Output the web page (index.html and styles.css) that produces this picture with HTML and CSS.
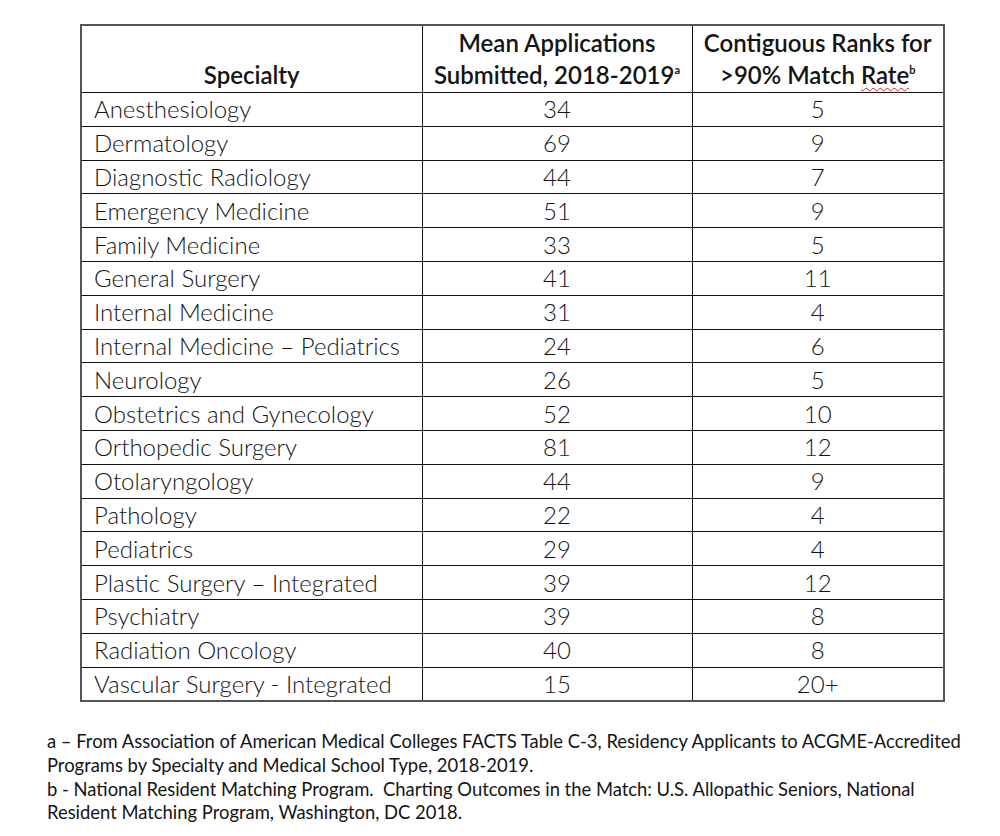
FILE: index.html
```html
<!DOCTYPE html>
<html>
<head>
<meta charset="utf-8">
<link rel="stylesheet" href="styles.css">
</head>
<body>
<div class="page">
  <table class="data">
    <colgroup>
      <col class="c1"><col class="c2"><col class="c3">
    </colgroup>
    <thead>
      <tr>
        <th class="spec">Specialty</th>
        <th>Mean Applications<br>Submitted, 2018-2019<sup>a</sup></th>
        <th>Contiguous Ranks for<br>&gt;90% Match <span class="spell">Rate</span><sup>b</sup></th>
      </tr>
    </thead>
    <tbody>
      <tr><td>Anesthesiology</td><td>34</td><td>5</td></tr>
      <tr><td>Dermatology</td><td>69</td><td>9</td></tr>
      <tr><td>Diagnostic Radiology</td><td>44</td><td>7</td></tr>
      <tr><td>Emergency Medicine</td><td>51</td><td>9</td></tr>
      <tr><td>Family Medicine</td><td>33</td><td>5</td></tr>
      <tr><td>General Surgery</td><td>41</td><td>11</td></tr>
      <tr><td>Internal Medicine</td><td>31</td><td>4</td></tr>
      <tr><td>Internal Medicine – Pediatrics</td><td>24</td><td>6</td></tr>
      <tr><td>Neurology</td><td>26</td><td>5</td></tr>
      <tr><td>Obstetrics and Gynecology</td><td>52</td><td>10</td></tr>
      <tr><td>Orthopedic Surgery</td><td>81</td><td>12</td></tr>
      <tr><td>Otolaryngology</td><td>44</td><td>9</td></tr>
      <tr><td>Pathology</td><td>22</td><td>4</td></tr>
      <tr><td>Pediatrics</td><td>29</td><td>4</td></tr>
      <tr><td>Plastic Surgery – Integrated</td><td>39</td><td>12</td></tr>
      <tr><td>Psychiatry</td><td>39</td><td>8</td></tr>
      <tr><td>Radiation Oncology</td><td>40</td><td>8</td></tr>
      <tr><td>Vascular Surgery - Integrated</td><td>15</td><td>20+</td></tr>
    </tbody>
  </table>
  <div class="notes">
    <p>a – From Association of American Medical Colleges FACTS Table C-3, Residency Applicants to ACGME-Accredited Programs by Specialty and Medical School Type, 2018-2019.</p>
    <p>b - National Resident Matching Program.&nbsp; Charting Outcomes in the Match: U.S. Allopathic Seniors, National Resident Matching Program, Washington, DC 2018.</p>
  </div>
</div>
</body>
</html>
```
FILE: styles.css
```css
html, body {
  margin: 0;
  padding: 0;
  background: #ffffff;
}
body {
  font-family: "Lato", "Liberation Sans", sans-serif;
  color: #141414;
}
.page {
  padding: 24px 0 0 80px;
}
.data {
  border-collapse: collapse;
  width: 865px;
  table-layout: fixed;
  border: 2px solid #555555;
}
.c1 { width: 341px; }
.c2 { width: 270px; }
.c3 { width: 252px; }
.data th {
  font-weight: 600;
  font-size: 24px;
  line-height: 32px;
  height: 65px;
  padding: 0 2px 1px;
  vertical-align: bottom;
  text-align: center;
  border: 1px solid #111111;
}
.data td {
  font-size: 24px;
  font-weight: 300;
  height: 32.8px;
  padding: 0 12px;
  line-height: 26px;
  border: 1px solid #111111;
  text-align: center;
  white-space: nowrap;
}
.data td:first-child {
  text-align: left;
}
.data sup {
  font-size: 11px;
  line-height: 0;
  vertical-align: 10px;
  font-weight: 700;
}
.spell {
  text-decoration: underline wavy #d02020;
  text-decoration-thickness: 1px;
  text-underline-offset: 3px;
}
.notes {
  margin: 28px 0 0 -33px;
  width: 930px;
  font-size: 18.4px;
  line-height: 23.7px;
}
.notes p {
  margin: 0;
}
```
